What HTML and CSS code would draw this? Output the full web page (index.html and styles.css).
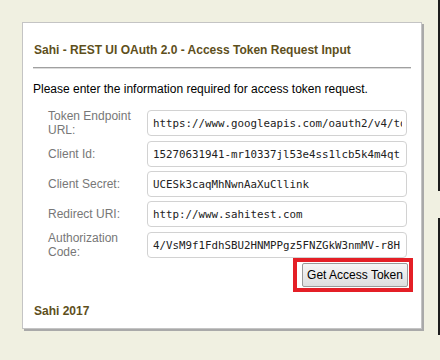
FILE: index.html
```html
<!DOCTYPE html>
<html lang="en">
<head>
    <meta charset="UTF-8">
    <meta name="viewport" content="width=device-width, initial-scale=1.0">
    <title>Sahi - REST UI OAuth 2.0</title>
    <link rel="stylesheet" href="styles.css">
</head>
<body>
<div class="screen">
    <div class="page">
        <div class="panel">
            <h2 class="title">Sahi - REST UI OAuth 2.0 - Access Token Request Input</h2>
            <hr class="rule">
            <p class="intro">Please enter the information required for access token request.</p>

            <form class="fields">
                <label class="label" for="tokenUrl">Token Endpoint URL:</label>
                <input class="field" id="tokenUrl" type="text" value="https://www.googleapis.com/oauth2/v4/token">

                <label class="label" for="clientId">Client Id:</label>
                <input class="field" id="clientId" type="text" value="15270631941-mr10337jl53e4ss1lcb5k4m4qt">

                <label class="label" for="clientSecret">Client Secret:</label>
                <input class="field" id="clientSecret" type="text" value="UCESk3caqMhNwnAaXuCllink">

                <label class="label" for="redirectUri">Redirect URI:</label>
                <input class="field" id="redirectUri" type="text" value="http://www.sahitest.com">

                <label class="label" for="authCode">Authorization Code:</label>
                <input class="field" id="authCode" type="text" value="4/VsM9f1FdhSBU2HNMPPgz5FNZGkW3nmMV-r8H">
            </form>

            <div class="actions">
                <span class="highlight">
                    <button class="btn" type="button">Get Access Token</button>
                </span>
            </div>

            <div class="footer">Sahi 2017</div>
        </div>
    </div>
    <div class="edge">
        <div class="edge-top"></div>
        <div class="edge-gap"></div>
        <div class="edge-bottom"></div>
    </div>
</div>
</body>
</html>
```

FILE: styles.css
```css
body, html {
    margin: 0;
    padding: 0;
    font-family: "Liberation Sans", Arial, sans-serif;
    background-color: #f0f0e1;
    color: #000000;
}
.screen {
    display: flex;
    height: 360px;
}
.page {
    flex: 1;
}
.edge {
    width: 2px;
    display: flex;
    flex-direction: column;
}
.edge-top {
    height: 191px;
    background-color: #1c1c1c;
}
.edge-gap {
    height: 27px;
}
.edge-bottom {
    height: 117px;
    background-color: #1c1c1c;
}
.panel {
    margin: 22px 0 0 22px;
    width: 378px;
    height: 305px;
    padding: 0 10px;
    background-color: #ffffff;
    border: 1px solid #c4c4c4;
    box-shadow: 2px 2px 0 #a9a9a9;
}
.title {
    margin: 20px 0 0 1px;
    font-size: 12px;
    line-height: 14px;
    font-weight: bold;
    color: #5e4f1c;
}
.rule {
    margin: 10px 0 0 0;
    border: 0;
    border-top: 1px solid #a0a0a0;
    border-bottom: 1px solid #dcdcdc;
}
.intro {
    margin: 13px 0 0 0;
    font-size: 12px;
    line-height: 14px;
}
.fields {
    display: grid;
    grid-template-columns: 99px 260px;
    row-gap: 4px;
    align-items: center;
    margin: 13px 0 0 15px;
}
.label {
    font-size: 12px;
    line-height: 14px;
    color: #777777;
}
.field {
    box-sizing: border-box;
    width: 260px;
    height: 26px;
    margin: 0;
    padding: 0 4px 0 5px;
    font-family: "DejaVu Sans Mono", monospace;
    font-size: 10.8px;
    color: #222222;
    border: 1px solid #d2d2d2;
    border-radius: 4px;
    background-color: #ffffff;
}
.actions {
    display: flex;
    justify-content: flex-end;
    margin: -1px -2px 0 0;
}
.highlight {
    display: flex;
    padding: 1px 1px 1px 5px;
    border: 4px solid #e41f26;
}
.btn {
    height: 24px;
    width: 106px;
    padding: 0;
    font-family: "Liberation Sans", Arial, sans-serif;
    font-size: 12px;
    color: #000000;
    border: 1px solid #9a9a9a;
    border-radius: 2px;
    background: linear-gradient(#f6f6f6, #dedede);
}
.footer {
    margin: 12px 0 0 1px;
    font-size: 12px;
    line-height: 14px;
    font-weight: bold;
    color: #5e4f1c;
}
```
